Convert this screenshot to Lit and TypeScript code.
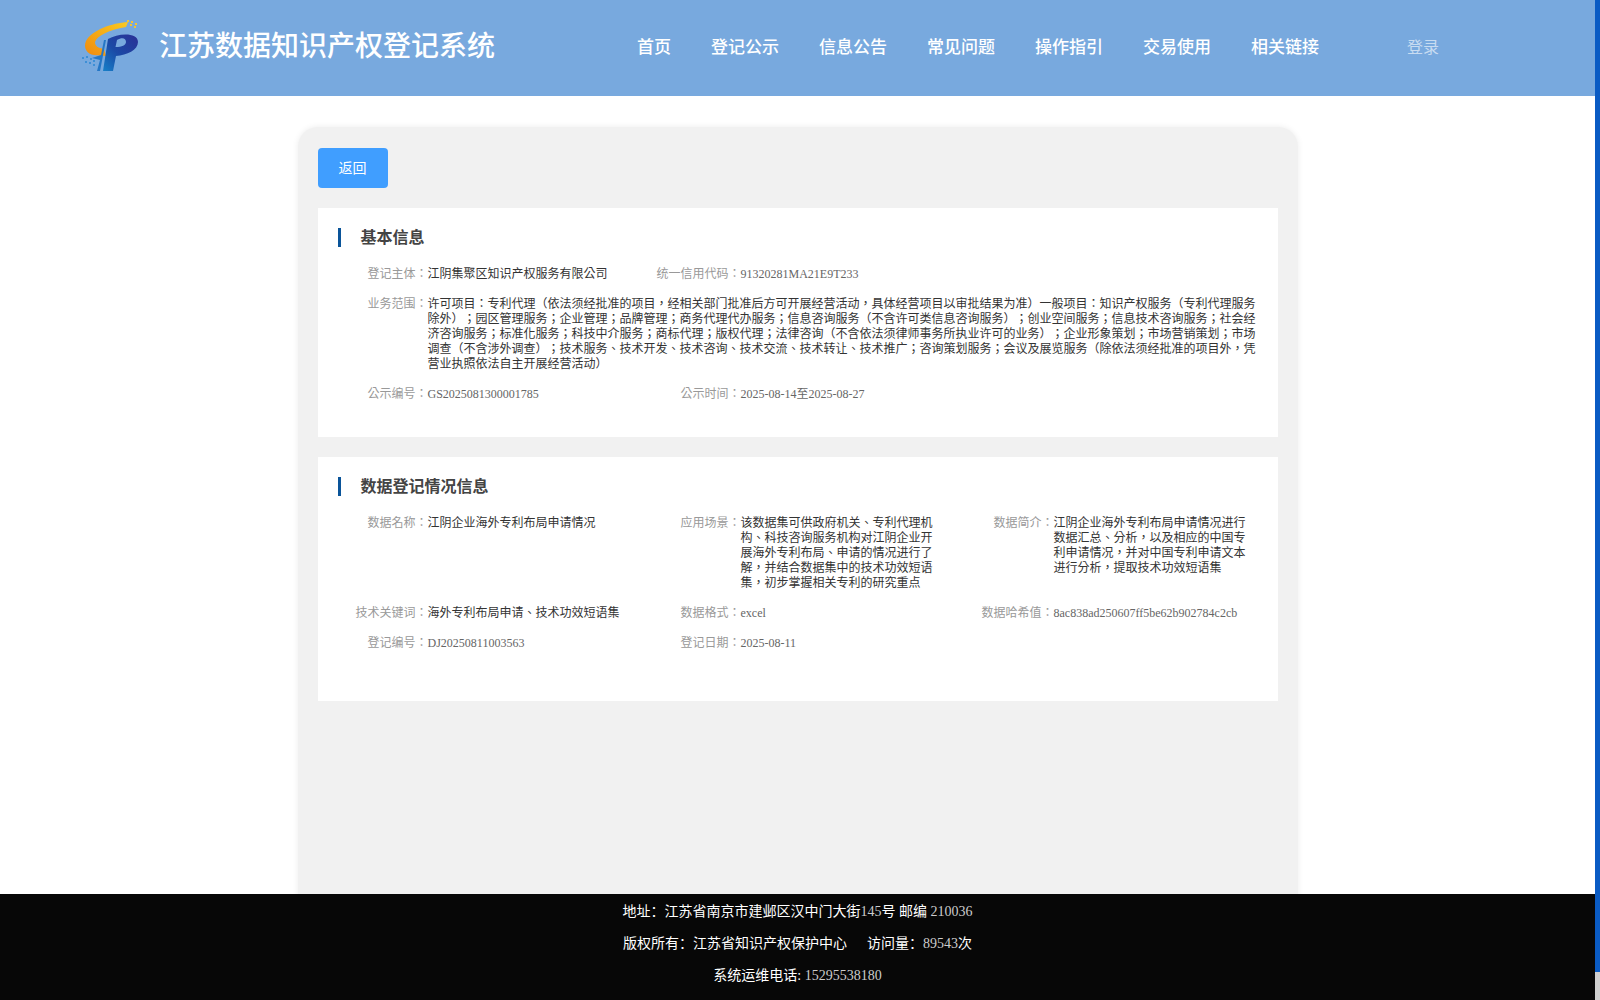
import { LitElement, html, css, svg } from 'lit';
import { customElement } from 'lit/decorators.js';

const NAV = ['首页', '登记公示', '信息公告', '常见问题', '操作指引', '交易使用', '相关链接'];

const SCOPE =
  '许可项目：专利代理（依法须经批准的项目，经相关部门批准后方可开展经营活动，具体经营项目以审批结果为准）一般项目：知识产权服务（专利代理服务除外）；园区管理服务；企业管理；品牌管理；商务代理代办服务；信息咨询服务（不含许可类信息咨询服务）；创业空间服务；信息技术咨询服务；社会经济咨询服务；标准化服务；科技中介服务；商标代理；版权代理；法律咨询（不含依法须律师事务所执业许可的业务）；企业形象策划；市场营销策划；市场调查（不含涉外调查）；技术服务、技术开发、技术咨询、技术交流、技术转让、技术推广；咨询策划服务；会议及展览服务（除依法须经批准的项目外，凭营业执照依法自主开展经营活动）';

type Row = { label: string; value: string; wide?: boolean; code?: boolean };

const BASIC: Row[] = [
  { label: '登记主体：', value: '江阴集聚区知识产权服务有限公司' },
  { label: '统一信用代码：', value: '91320281MA21E9T233', code: true },
  { label: '业务范围：', value: SCOPE, wide: true },
  { label: '公示编号：', value: 'GS2025081300001785', code: true },
  { label: '公示时间：', value: '2025-08-14至2025-08-27', code: true },
];

const REGISTER: Row[] = [
  { label: '数据名称：', value: '江阴企业海外专利布局申请情况' },
  {
    label: '应用场景：',
    value:
      '该数据集可供政府机关、专利代理机构、科技咨询服务机构对江阴企业开展海外专利布局、申请的情况进行了解，并结合数据集中的技术功效短语集，初步掌握相关专利的研究重点',
  },
  {
    label: '数据简介：',
    value: '江阴企业海外专利布局申请情况进行数据汇总、分析，以及相应的中国专利申请情况，并对中国专利申请文本进行分析，提取技术功效短语集',
  },
  { label: '技术关键词：', value: '海外专利布局申请、技术功效短语集' },
  { label: '数据格式：', value: 'excel', code: true },
  { label: '数据哈希值：', value: '8ac838ad250607ff5be62b902784c2cb', code: true },
  { label: '登记编号：', value: 'DJ20250811003563', code: true },
  { label: '登记日期：', value: '2025-08-11', code: true },
];

const BITS = [
  [47, 0], [51, 1], [55, 3], [50, 4], [54, 6], [45, 3],
  [2, 37], [6, 36], [10, 38], [5, 41], [9, 42], [13, 40], [13, 44],
];

const logo = svg`
  <svg class="logo" viewBox="0 0 60 52" width="60" height="52" aria-hidden="true">
    <defs>
      <linearGradient id="sw" x1="0" y1="1" x2="1" y2="0">
        <stop offset="0" stop-color="#ef8a10" />
        <stop offset="1" stop-color="#fbcb1f" />
      </linearGradient>
      <linearGradient id="pp" x1="0" y1="1" x2="1" y2="0">
        <stop offset="0" stop-color="#1780c8" />
        <stop offset="0.45" stop-color="#1b4aa6" />
        <stop offset="1" stop-color="#2b2f95" />
      </linearGradient>
    </defs>
    <path fill="url(#sw)" d="M48 2C32 3 12 10 6 21C3 28 7 34 14 35L26 36L24 29C18 28 15 26 15 22C17 16 28 10 46 7Z" />
    <path fill="url(#pp)" fill-rule="evenodd" d="M28 19C38 13 58 12 58 22C58 30 47 35 36 36L33 51H23ZM37 20L35.5 27C42 27 46 25 46 22C46 18 42 17 37 20Z" />
    <path fill="#2577c6" d="M24 20L26 20L20 51H17L20 40L12 38L21 35Z" />
    ${BITS.map(
      ([x, y], i) => svg`<rect x=${x} y=${y} width="2" height="2" fill=${i < 6 ? '#f6c531' : '#3d8fd6'} />`,
    )}
  </svg>
`;

@customElement('app-root')
export class AppRoot extends LitElement {
  static styles = css`
    :host {
      display: flex;
      height: 100vh;
      overflow: hidden;
      background: #fff;
      font-family: 'Liberation Serif', 'Noto Sans CJK SC', serif;
      text-spacing-trim: space-all;
    }

    .page {
      flex: 1;
      min-width: 0;
      display: flex;
      flex-direction: column;
    }

    .header {
      flex: none;
      height: 96px;
      display: flex;
      align-items: center;
      padding-left: 80px;
      background: #78a9de;
      color: #fff;
    }

    .logo {
      flex: none;
      margin: -5px 19px 0 0;
    }

    .site-title {
      width: 337px;
      padding-bottom: 8px;
      font-size: 28px;
      font-weight: 500;
      white-space: nowrap;
    }

    .nav {
      display: flex;
      gap: 40px;
      margin-left: 141px;
      padding-bottom: 6px;
      font-size: 17px;
      font-weight: 500;
      white-space: nowrap;
    }

    .login {
      margin-left: 88px;
      padding-bottom: 4px;
      font-size: 16px;
      color: rgba(255, 255, 255, 0.6);
    }

    .main {
      flex: 1;
      min-height: 0;
      overflow: hidden;
      display: flex;
      justify-content: center;
      padding-top: 31px;
    }

    .card {
      flex: none;
      box-sizing: border-box;
      width: 1000px;
      height: 900px;
      padding: 21px 20px;
      background: #f1f1f1;
      border-radius: 20px;
      box-shadow: 0 0 6px rgba(0, 0, 0, 0.08);
    }

    .back {
      display: block;
      width: 70px;
      height: 40px;
      padding: 0 0 2px;
      border: none;
      border-radius: 4px;
      background: #409eff;
      color: #fff;
      font: inherit;
      font-size: 14px;
    }

    .panel {
      margin-top: 20px;
      padding: 20px 20px 35px;
      background: #fff;
    }

    .panel.tall {
      padding-bottom: 50px;
    }

    .panel-title {
      height: 19px;
      padding-left: 20px;
      border-left: 3px solid #0a5499;
      color: #444;
      font-size: 16px;
      font-weight: 700;
      line-height: 19px;
    }

    .fields {
      display: grid;
      grid-template-columns: repeat(3, 313px);
      row-gap: 15px;
      margin: 20px 0 0 6px;
      font-family: 'Liberation Serif', 'Noto Sans CJK TC', serif;
      font-size: 12px;
      line-height: 15px;
    }

    .field {
      display: flex;
      align-items: flex-start;
    }

    .field.wide {
      grid-column: 1 / -1;
    }

    .label {
      flex: none;
      width: 84px;
      color: #999;
      text-align: right;
      white-space: nowrap;
    }

    .value {
      width: 200px;
      color: #333;
    }

    .value.code {
      color: #666;
    }

    .wide .value {
      width: 830px;
    }

    .footer {
      flex: none;
      height: 106px;
      box-sizing: border-box;
      padding-top: 2px;
      background: #070707;
      color: #fff;
      font-size: 14px;
      line-height: 32px;
      text-align: center;
    }

    .num {
      color: #ccc;
    }

    .visits {
      margin-left: 20px;
    }

    .rail {
      flex: none;
      width: 5px;
      display: flex;
      flex-direction: column;
      background: #cfcfcf;
    }

    .thumb {
      height: 972px;
      background: #0a5bc4;
    }
  `;

  private renderFields(rows: Row[]) {
    return html`
      <div class="fields">
        ${rows.map(
          (r) => html`
            <div class="field ${r.wide ? 'wide' : ''}">
              <span class="label">${r.label}</span>
              <span class="value ${r.code ? 'code' : ''}">${r.value}</span>
            </div>
          `,
        )}
      </div>
    `;
  }

  render() {
    return html`
      <div class="page">
        <header class="header">
          ${logo}
          <div class="site-title">江苏数据知识产权登记系统</div>
          <nav class="nav">${NAV.map((n) => html`<span>${n}</span>`)}</nav>
          <span class="login">登录</span>
        </header>
        <main class="main">
          <div class="card">
            <button class="back">返回</button>
            <section class="panel">
              <div class="panel-title">基本信息</div>
              ${this.renderFields(BASIC)}
            </section>
            <section class="panel tall">
              <div class="panel-title">数据登记情况信息</div>
              ${this.renderFields(REGISTER)}
            </section>
          </div>
        </main>
        <footer class="footer">
          <div>地址：江苏省南京市建邺区汉中门大街<span class="num">145</span>号 邮编 <span class="num">210036</span></div>
          <div>版权所有：江苏省知识产权保护中心<span class="visits">访问量：</span><span class="num">89543</span>次</div>
          <div>系统运维电话: <span class="num">15295538180</span></div>
        </footer>
      </div>
      <div class="rail"><div class="thumb"></div></div>
    `;
  }
}
